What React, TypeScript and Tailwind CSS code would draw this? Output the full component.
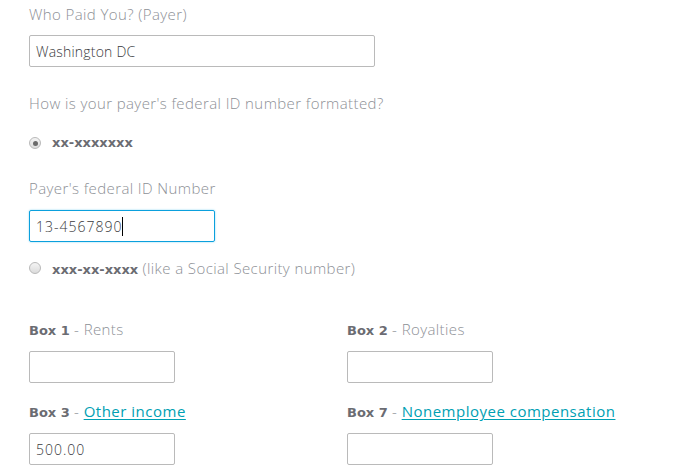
import React from 'react';

const font = { fontFamily: '"Open Sans", "Noto Sans", sans-serif' };
const bold = { fontFamily: '"DejaVu Sans", Verdana, sans-serif' };

const Radio: React.FC<{ checked?: boolean }> = ({ checked }) => (
  <span className="w-[12px] h-[12px] rounded-full border border-[#b9b9b9] bg-gradient-to-b from-[#f4f4f4] to-[#dcdcdc] flex items-center justify-center shrink-0">
    {checked && <span className="w-[5px] h-[5px] rounded-full bg-[#6a6a6a]" />}
  </span>
);

const Field: React.FC<{ value?: string; width: string; focused?: boolean; numeric?: boolean }> = ({
  value,
  width,
  focused,
  numeric,
}) => (
  <div
    className={`${width} h-[32px] rounded-[2px] border flex items-center px-[6px] text-[14px] font-light text-[#393a3d] ${
      numeric ? 'tracking-[1px]' : 'tracking-[0.2px]'
    } ${focused ? 'border-[#0ba0dd] shadow-[0_0_2px_#7fd0f0]' : 'border-[#bababa]'}`}
  >
    {value}
    {focused && <span className="w-px h-[19px] bg-black" />}
  </div>
);

const Label: React.FC<{ children: React.ReactNode; className?: string }> = ({ children, className }) => (
  <div className={`h-[20px] text-[15px] leading-[20px] tracking-[0.4px] text-[#8d9096] font-light whitespace-nowrap ${className ?? ''}`}>
    {children}
  </div>
);

const BoxLabel: React.FC<{ n: string; name: string; link?: boolean }> = ({ n, name, link }) => (
  <Label>
    <span className="font-bold text-[13px] tracking-normal text-[#6b6c72]" style={bold}>Box {n}</span> -{' '}
    {link ? (
      <span className="text-[#00a0b3] font-normal tracking-[0.5px] underline underline-offset-2">{name}</span>
    ) : (
      name
    )}
  </Label>
);

export default function App() {
  return (
    <div className="min-h-screen bg-white pl-[29px] pt-[4px]" style={font}>
      <Label>Who Paid You? (Payer)</Label>
      <div className="mt-[11px]">
        <Field value="Washington DC" width="w-[346px]" />
      </div>

      <Label className="mt-[26px]">How is your payer's federal ID number formatted?</Label>
      <div className="mt-[20px] flex items-center h-[20px] gap-[11px]">
        <Radio checked />
        <span className="text-[13px] font-bold text-[#6b6c72]" style={bold}>xx-xxxxxxx</span>
      </div>

      <Label className="mt-[25px]">Payer's federal ID Number</Label>
      <div className="mt-[12px]">
        <Field value="13-4567890" width="w-[186px]" focused numeric />
      </div>

      <div className="mt-[16px] flex items-center h-[20px] gap-[11px]">
        <Radio />
        <Label>
          <span className="text-[13px] tracking-normal font-bold text-[#6b6c72]" style={bold}>xxx-xx-xxxx</span> (like a Social Security number)
        </Label>
      </div>

      <div className="mt-[41px] grid grid-cols-[318px_318px] gap-y-[18px]">
        <div>
          <BoxLabel n="1" name="Rents" />
          <div className="mt-[12px]"><Field width="w-[146px]" /></div>
        </div>
        <div>
          <BoxLabel n="2" name="Royalties" />
          <div className="mt-[12px]"><Field width="w-[146px]" /></div>
        </div>
        <div>
          <BoxLabel n="3" name="Other income" link />
          <div className="mt-[12px]"><Field value="500.00" width="w-[146px]" numeric /></div>
        </div>
        <div>
          <BoxLabel n="7" name="Nonemployee compensation" link />
          <div className="mt-[12px]"><Field width="w-[146px]" /></div>
        </div>
      </div>
    </div>
  );
}
